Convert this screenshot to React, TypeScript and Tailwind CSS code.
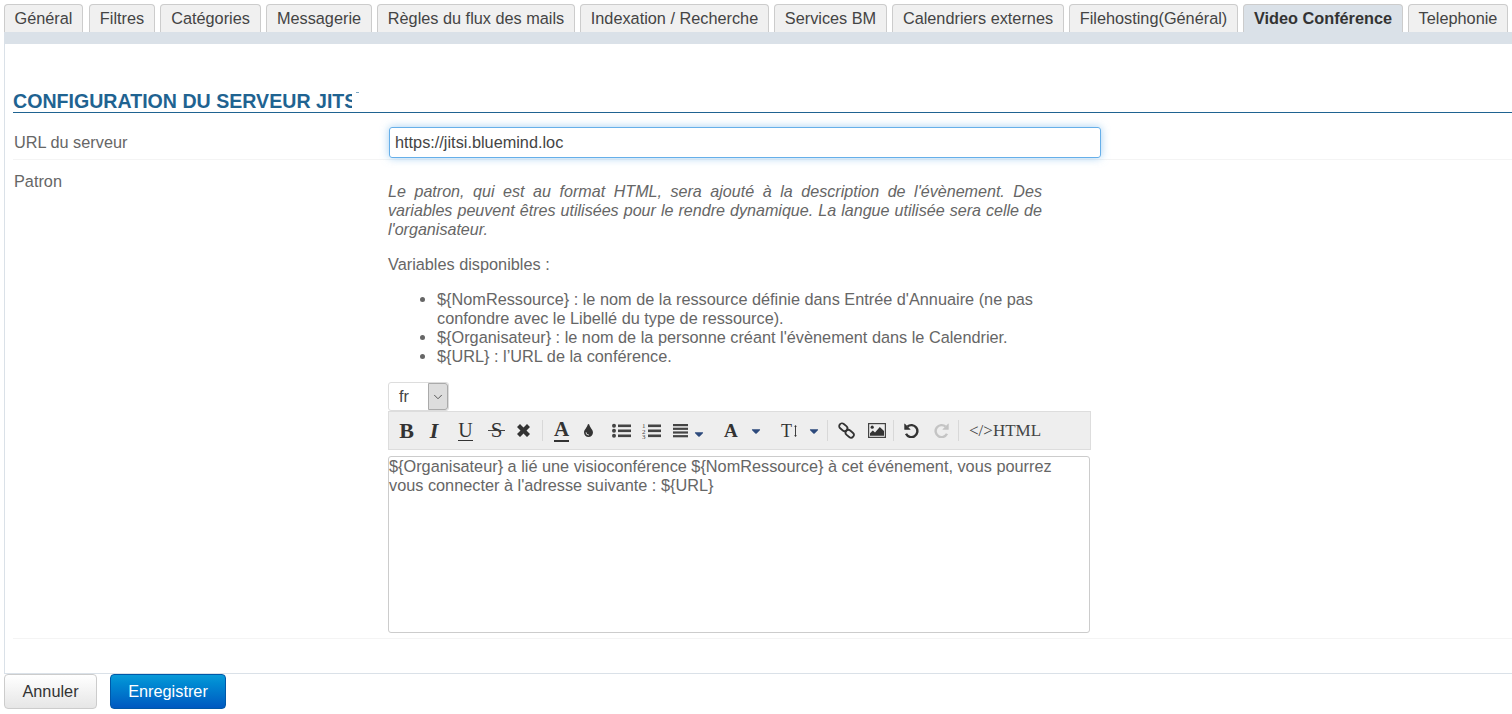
import {FaTint,FaCaretDown} from 'react-icons/fa'
import {ChevronDown} from 'lucide-react'

const tabs = [
  {label:'Général',w:'w-[79px] mr-px'},
  {label:'Filtres',w:'w-[66px]'},
  {label:'Catégories',w:'w-[101px]'},
  {label:'Messagerie',w:'w-[106px]'},
  {label:'Règles du flux des mails',w:'w-[198px]'},
  {label:'Indexation / Recherche',w:'w-[189px]'},
  {label:'Services BM',w:'w-[113px]'},
  {label:'Calendriers externes',w:'w-[172px]'},
  {label:'Filehosting(Général)',w:'w-[169px]'},
  {label:'Video Conférence',w:'w-[160px]',active:true},
  {label:'Telephonie',w:'w-[100px]'},
]

function Sep({ml}:{ml:string}) {
  return <span className={"w-px h-[21px] bg-[#d8d8d8] shrink-0 " + ml}></span>
}

function Caret({className}:{className:string}) {
  return <FaCaretDown size={14} className={"w-[12px] text-[#2d4a7c] " + className} />
}

function ListLines({x}:{x:number}) {
  return (
    <>
      <rect x={x} y="2.5" width={19-x} height="2.6" />
      <rect x={x} y="7.5" width={19-x} height="2.6" />
      <rect x={x} y="12.5" width={19-x} height="2.6" />
    </>
  )
}

function App() {
  return (
    <div className="w-[1512px] h-[714px] overflow-hidden bg-white text-[16.3px] text-[#666666] font-['Liberation_Sans',Arial,sans-serif]">

      <div className="flex gap-[5px] pl-[4px] pt-[4px] h-[32px] overflow-hidden">
        {tabs.map((t)=>(
          <div
            key={t.label}
            className={t.active
              ? 'shrink-0 h-[28px] flex items-center justify-center whitespace-nowrap rounded-t-[4px] border border-b-0 border-[#cccccc] bg-[#dae1e8] font-bold text-[#333333] ' + t.w
              : 'shrink-0 h-[28px] flex items-center justify-center whitespace-nowrap rounded-t-[4px] border border-b-0 border-[#cccccc] bg-[#f0f0f0] text-[#444444] ' + t.w}
          >
            {t.label}
          </div>
        ))}
      </div>
      <div className="h-[12px] ml-[4px] bg-[#dae1e8]"></div>

      <div className="ml-[4px] h-[630px] border-l border-b border-[#dae1e8] pl-[8px]">
        <div className="relative h-[69px] border-b border-[#1f6391] flex items-end">
          <h2 className="w-[339px] overflow-hidden whitespace-nowrap text-[19.6px] leading-[21px] font-bold text-[#1f6391]">
            CONFIGURATION DU SERVEUR JITSI
          </h2>
          <span className="absolute left-[343px] top-[48px] w-[3px] h-px bg-[#7fa8c4]"></span>
        </div>

        <div className="h-[47px] flex border-b border-[#f4f4f4]">
          <div className="w-[376px] pl-[1px] pt-[20px] leading-[19px]">URL du serveur</div>
          <input
            readOnly
            value="https://jitsi.bluemind.loc"
            className="mt-[14px] w-[712px] h-[31px] rounded-[3px] border border-[#66afe9] px-[5px] text-[#444444] shadow-[0_0_8px_rgba(102,175,233,0.6)] outline-none"
          />
        </div>

        <div className="h-[479px] flex border-b border-[#f4f4f4]">
          <div className="w-[375px] pl-[1px] pt-[12px] leading-[19px]">Patron</div>
          <div className="w-[704px] pt-[22px] leading-[19px]">
            <p className="w-[654px] text-[16.1px] italic text-justify">
              Le patron, qui est au format HTML, sera ajouté à la description de l'évènement. Des variables peuvent êtres utilisées pour le rendre dynamique. La langue utilisée sera celle de l'organisateur.
            </p>
            <p className="mt-[16px]">Variables disponibles :</p>
            <ul className="mt-[16px] w-[654px] pl-[49px] list-disc">
              <li>${'{'}NomRessource{'}'} : le nom de la ressource définie dans Entrée d'Annuaire (ne pas confondre avec le Libellé du type de ressource).</li>
              <li>${'{'}Organisateur{'}'} : le nom de la personne créant l'évènement dans le Calendrier.</li>
              <li>${'{'}URL{'}'} : l’URL de la conférence.</li>
            </ul>

            <div className="mt-[16px] w-[61px] h-[29px] flex rounded-[3px] border border-[#dddddd] text-[#444444]">
              <span className="w-[39px] pl-[10px] leading-[27px]">fr</span>
              <span className="w-[20px] flex items-center justify-center rounded-r-[3px] border border-[#aaaaaa] bg-[#dddddd]">
                <ChevronDown size={14} strokeWidth={1.5} className="text-[#444444]" />
              </span>
            </div>

            <div className="w-[703px] h-[39px] flex items-center border border-[#dddddd] bg-[#eeeeee] pl-[10px] text-[#333333] font-['Liberation_Serif',serif] leading-none">
              <span className="w-[15px] text-[22px] font-bold text-center">B</span>
              <span className="ml-[14px] w-[12px] text-[22px] font-bold italic text-center">I</span>
              <span className="ml-[18px] w-[15px] text-[20px] text-center border-b border-[#333333]">U</span>
              <span className="relative ml-[15px] w-[17px] text-[21px] text-center">
                S
                <span className="absolute left-0 right-0 top-[10px] h-px bg-[#444444]"></span>
              </span>
              <svg viewBox="0 0 13 13" className="ml-[12px] w-[13px] h-[13px] fill-[#333333]">
                <path d="M0 3 L3 0 L6.5 3.5 L10 0 L13 3 L9.5 6.5 L13 10 L10 13 L6.5 9.5 L3 13 L0 10 L3.5 6.5 Z" />
              </svg>
              <Sep ml="ml-[12px]" />
              <span className="ml-[11px] w-[15px] text-[21px] font-bold text-center border-b-2 border-[#333333]">A</span>
              <FaTint size={13} className="ml-[14px] w-[11px]" />
              <svg viewBox="0 0 19 18" className="ml-[18px] w-[19px] h-[18px] fill-[#444444]">
                <circle cx="2" cy="3.8" r="2" />
                <circle cx="2" cy="8.8" r="2" />
                <circle cx="2" cy="13.8" r="2" />
                <ListLines x={6} />
              </svg>
              <svg viewBox="0 0 19 18" className="ml-[11px] w-[19px] h-[18px] fill-[#444444]">
                <text x="0" y="6" fontSize="7" fontFamily="Liberation Serif">1</text>
                <text x="0" y="11.5" fontSize="7" fontFamily="Liberation Serif">2</text>
                <text x="0" y="17" fontSize="7" fontFamily="Liberation Serif">3</text>
                <ListLines x={6} />
              </svg>
              <svg viewBox="0 0 15 14" className="ml-[12px] w-[15px] h-[14px] fill-[#444444]">
                <rect y="0" width="15" height="2.2" />
                <rect y="3.7" width="15" height="2.2" />
                <rect y="7.4" width="15" height="2.2" />
                <rect y="11.1" width="15" height="2.2" />
              </svg>
              <Caret className="ml-[5px] mt-[6px]" />
              <span className="ml-[19px] w-[13px] text-[19px] font-bold text-center">A</span>
              <Caret className="ml-[13px]" />
              <span className="ml-[19px] w-[16px] flex items-center justify-between text-[18px]">
                T
                <svg viewBox="0 0 3 13" className="w-[3px] h-[12px] fill-[#333333]">
                  <path d="M0 2 L1.5 0 L3 2 L2 2 L2 11 L3 11 L1.5 13 L0 11 L1 11 L1 2 Z" />
                </svg>
              </span>
              <Caret className="ml-[11px]" />
              <Sep ml="ml-[7px]" />
              <svg viewBox="0 0 17 17" className="ml-[10px] w-[17px] h-[17px] fill-none stroke-[#333333]" strokeWidth="1.8">
                <rect x="0.8" y="2.4" width="9" height="5.6" rx="2.8" transform="rotate(40 5.3 5.2)" />
                <rect x="7.2" y="9" width="9" height="5.6" rx="2.8" transform="rotate(40 11.7 11.8)" />
              </svg>
              <svg viewBox="0 0 18 15" className="ml-[13px] w-[18px] h-[15px]">
                <rect x="0.6" y="0.6" width="16.8" height="13.8" fill="none" stroke="#444444" strokeWidth="1.2" />
                <circle cx="4.2" cy="4.2" r="1.6" fill="#333333" />
                <path d="M2 12.8 L2 10.2 L4.8 7.6 L7 9.4 L11.8 4 L16 8 L16 12.8 Z" fill="#333333" />
              </svg>
              <Sep ml="ml-[7px]" />
              <svg viewBox="0 0 15 15" className="ml-[10px] w-[15px] h-[15px] fill-none stroke-[#333333]" strokeWidth="2.4">
                <path d="M3.4 3.6 A6 6 0 1 1 2 10.8" />
                <path d="M0.6 0.8 L0.6 6.4 L6.2 6.4 Z" fill="#333333" strokeWidth="0.6" />
              </svg>
              <svg viewBox="0 0 15 15" className="ml-[15px] w-[15px] h-[15px] fill-none stroke-[#c4c4c4]" strokeWidth="2.4">
                <path d="M11.6 3.6 A6 6 0 1 0 13 10.8" />
                <path d="M14.4 0.8 L14.4 6.4 L8.8 6.4 Z" fill="#c4c4c4" strokeWidth="0.6" />
              </svg>
              <Sep ml="ml-[9px]" />
              <span className="ml-[10px] text-[17px] text-[#444444]">&lt;/&gt;HTML</span>
            </div>

            <div className="mt-[6px] w-[702px] h-[177px] rounded-[3px] border border-[#cccccc] pr-[10px] leading-[19px]">
              ${'{'}Organisateur{'}'} a lié une visioconférence ${'{'}NomRessource{'}'} à cet événement, vous pourrez vous connecter à l'adresse suivante : ${'{'}URL{'}'}
            </div>
          </div>
        </div>
      </div>

      <div className="flex gap-[13px] pl-[4px]">
        <button className="w-[93px] h-[35px] rounded-[4px] border border-[#cccccc] bg-gradient-to-b from-white to-[#e6e6e6] text-[#333333]">Annuler</button>
        <button className="w-[116px] h-[35px] rounded-[4px] border border-[#0058a8] bg-gradient-to-b from-[#0a9ad8] to-[#0058c0] text-white">Enregistrer</button>
      </div>
    </div>
  )
}

export default App
